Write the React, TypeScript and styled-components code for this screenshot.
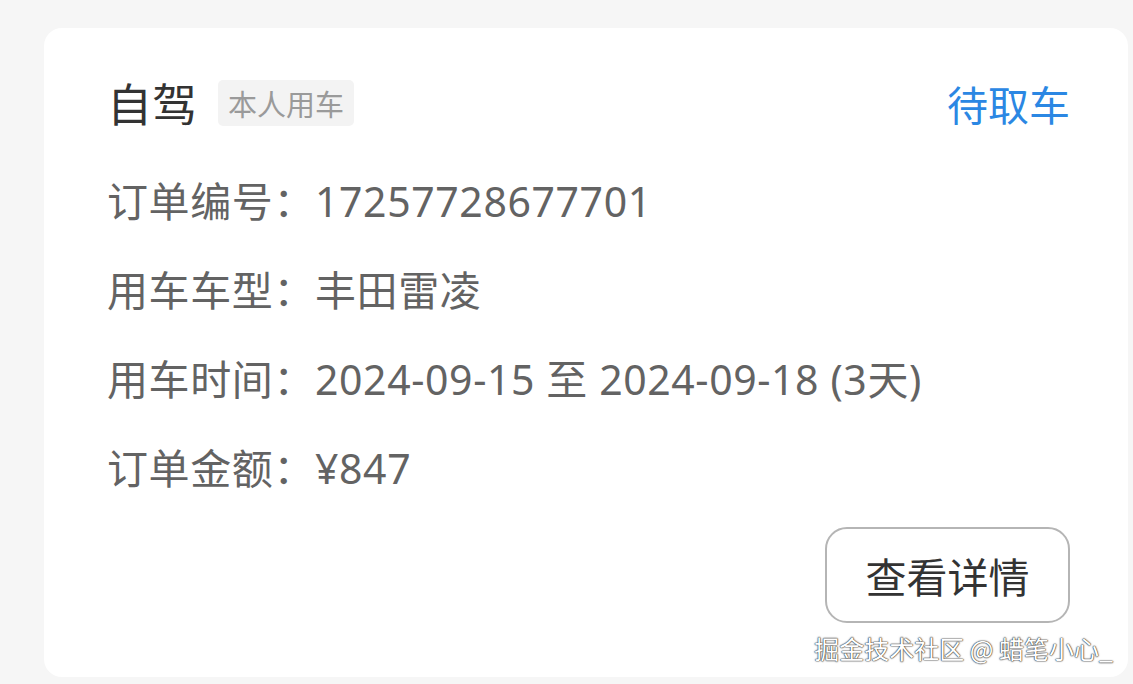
import React from 'react'
import styled, { createGlobalStyle } from 'styled-components'

const GlobalStyle = createGlobalStyle`
  html, body {
    margin: 0;
    padding: 0;
    background: #f6f6f6;
    font-family: 'Noto Sans CJK SC', 'Noto Sans', sans-serif;
  }
`

const Page = styled.div`
  position: relative;
  height: 684px;
  overflow: hidden;
  padding: 28px 5px 0 44px;
  box-sizing: border-box;
`

const Card = styled.div`
  height: 649px;
  background: #fff;
  border-radius: 18px;
  padding: 47px 58px 0 63px;
  box-sizing: border-box;
`

const Header = styled.div`
  display: flex;
  align-items: center;
  justify-content: space-between;
  height: 56px;
`

const TitleGroup = styled.div`
  display: flex;
  align-items: center;
  gap: 21px;
`

const Title = styled.span`
  font-size: 45px;
  line-height: 56px;
  color: #333;
`

const Tag = styled.span`
  display: inline-flex;
  align-items: center;
  height: 46px;
  padding: 0 10px;
  border-radius: 5px;
  background: #f3f3f3;
  color: #9a9a9a;
  font-size: 29px;
`

const Status = styled.span`
  font-size: 41px;
  line-height: 56px;
  color: #2b87e3;
`

const Rows = styled.div`
  display: flex;
  flex-direction: column;
  gap: 33px;
  margin-top: 42px;
`

const Row = styled.div`
  font-family: 'Noto Sans', 'Noto Sans CJK SC', sans-serif;
  font-size: 41px;
  line-height: 56px;
  letter-spacing: 0.6px;
  color: #636363;
  white-space: nowrap;
`

const Footer = styled.div`
  display: flex;
  justify-content: flex-end;
  margin-top: 31px;
`

const DetailButton = styled.button`
  width: 245px;
  height: 96px;
  border: 2px solid #b5b5b5;
  border-radius: 22px;
  background: #fff;
  color: #333;
  font-family: inherit;
  font-size: 41px;
  padding: 0;
  cursor: pointer;
`

const Watermark = styled.div`
  position: absolute;
  right: 20px;
  bottom: 20px;
  font-size: 25px;
  line-height: 32px;
  color: #fff;
  text-shadow: 0 0 1px #333, 0 0 1px #333, 0 0 2px #555;
  white-space: nowrap;
`

const rows = [
  { label: '订单编号', value: '17257728677701' },
  { label: '用车车型', value: '丰田雷凌' },
  { label: '用车时间', value: '2024-09-15 至 2024-09-18 (3天)' },
  { label: '订单金额', value: '¥847' },
]

const App: React.FC = () => {
  return (
    <>
      <GlobalStyle />
      <Page>
        <Card>
          <Header>
            <TitleGroup>
              <Title>自驾</Title>
              <Tag>本人用车</Tag>
            </TitleGroup>
            <Status>待取车</Status>
          </Header>
          <Rows>
            {rows.map(row => (
              <Row key={row.label}>
                {row.label}：{row.value}
              </Row>
            ))}
          </Rows>
          <Footer>
            <DetailButton>查看详情</DetailButton>
          </Footer>
        </Card>
        <Watermark>掘金技术社区 @ 蜡笔小心_</Watermark>
      </Page>
    </>
  )
}

export default App
